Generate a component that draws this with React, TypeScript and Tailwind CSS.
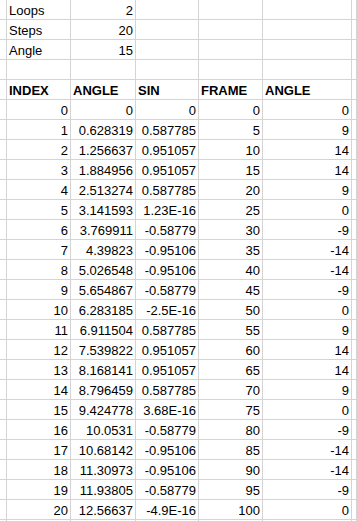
import React from 'react';

type Cell = { v: string; bold?: boolean; right?: boolean };

const params: [string, string][] = [
  ['Loops', '2'],
  ['Steps', '20'],
  ['Angle', '15'],
];

const rows: string[][] = [
  ['0', '0', '0', '0', '0'],
  ['1', '0.628319', '0.587785', '5', '9'],
  ['2', '1.256637', '0.951057', '10', '14'],
  ['3', '1.884956', '0.951057', '15', '14'],
  ['4', '2.513274', '0.587785', '20', '9'],
  ['5', '3.141593', '1.23E-16', '25', '0'],
  ['6', '3.769911', '-0.58779', '30', '-9'],
  ['7', '4.39823', '-0.95106', '35', '-14'],
  ['8', '5.026548', '-0.95106', '40', '-14'],
  ['9', '5.654867', '-0.58779', '45', '-9'],
  ['10', '6.283185', '-2.5E-16', '50', '0'],
  ['11', '6.911504', '0.587785', '55', '9'],
  ['12', '7.539822', '0.951057', '60', '14'],
  ['13', '8.168141', '0.951057', '65', '14'],
  ['14', '8.796459', '0.587785', '70', '9'],
  ['15', '9.424778', '3.68E-16', '75', '0'],
  ['16', '10.0531', '-0.58779', '80', '-9'],
  ['17', '10.68142', '-0.95106', '85', '-14'],
  ['18', '11.30973', '-0.95106', '90', '-14'],
  ['19', '11.93805', '-0.58779', '95', '-9'],
  ['20', '12.56637', '-4.9E-16', '100', '0'],
];

const blank: Cell = { v: '' };

export default function App() {
  const grid: Cell[][] = [];
  params.forEach(([k, v]) => {
    grid.push([blank, { v: k }, { v, right: true }, blank, blank, blank, blank]);
  });
  grid.push([blank, blank, blank, blank, blank, blank, blank]);
  grid.push([
    blank,
    { v: 'INDEX', bold: true },
    { v: 'ANGLE', bold: true },
    { v: 'SIN', bold: true },
    { v: 'FRAME', bold: true },
    { v: 'ANGLE', bold: true },
    blank,
  ]);
  rows.forEach((r) => {
    grid.push([blank, ...r.map((v) => ({ v, right: true })), blank]);
  });
  grid.push([blank, blank, blank, blank, blank, blank, blank]);

  return (
    <div className="w-[357px] h-[521px] overflow-hidden bg-white text-black" style={{ fontFamily: '"Liberation Sans", Arial, sans-serif' }}>
      <div className="grid grid-cols-[7px_64px_65px_63px_64px_89px_1fr] text-[13px]">
        {grid.map((row, ri) =>
          row.map((c, ci) => (
            <div
              key={ri + '-' + ci}
              className={`h-5 leading-5 pt-px border-r border-b border-[#d4d4d4] whitespace-nowrap overflow-hidden px-[2px] ${c.right ? 'text-right' : 'text-left'} ${c.bold ? 'font-bold' : ''}`}
            >
              {c.v}
            </div>
          ))
        )}
      </div>
    </div>
  );
}
